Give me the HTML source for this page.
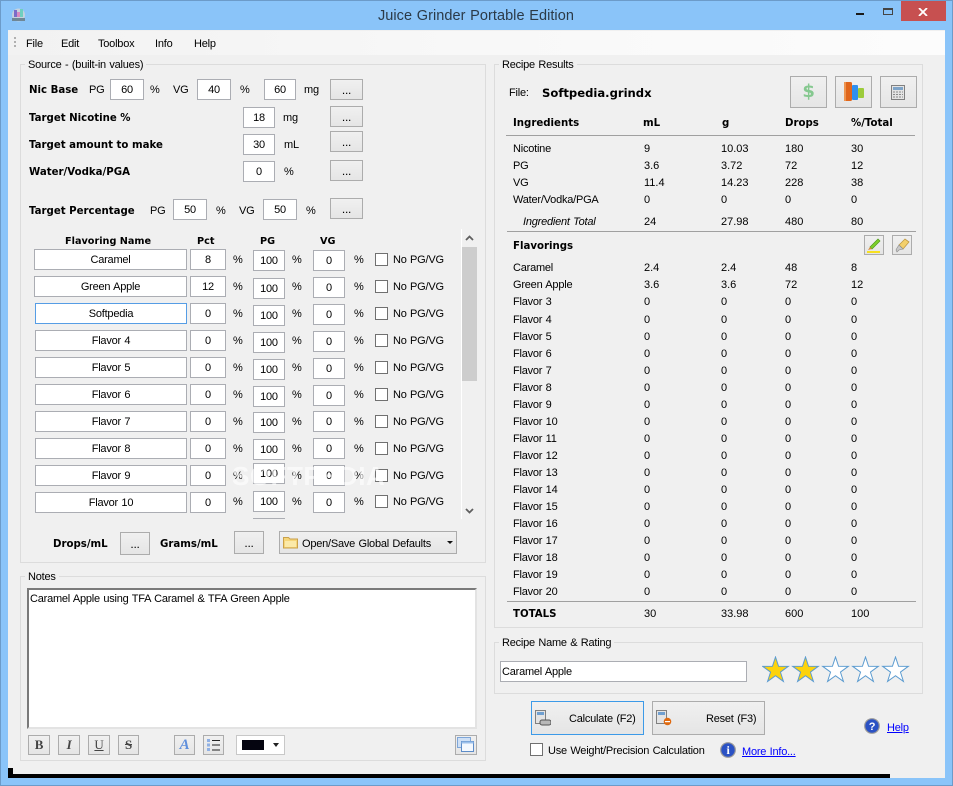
<!DOCTYPE html>
<html><head><meta charset="utf-8"><style>
html,body{margin:0;padding:0;width:953px;height:786px;overflow:hidden;background:#8ac4f9}
*{box-sizing:border-box}
body{font:11px "Liberation Sans",sans-serif;color:#000;position:relative;letter-spacing:-.22px;word-spacing:.6px}
div,span,svg{position:absolute}
.t{white-space:nowrap;height:14px;line-height:14px;margin-top:1px}
.t.p{margin-top:0}
.b{font-family:"DejaVu Sans",sans-serif;font-weight:bold;font-size:10.2px;letter-spacing:0;word-spacing:0;position:absolute;white-space:nowrap;height:14px;line-height:14px;margin-top:2px}
.fs{border:1px solid #dcdcdc}
.lg{background:#f0f0f0;padding:0 3px;height:14px;line-height:14px;white-space:nowrap;margin-top:1px}
.i{background:#fff;border:1px solid #abadb3;text-align:center;line-height:21px;height:21px;white-space:nowrap}
.btn{border:1px solid #acacac;background:linear-gradient(#f0f0f0,#e5e5e5);text-align:center;line-height:21px;height:21px;width:33px;font-size:12px}
.cb{background:#fff;border:1px solid #707070;width:13px;height:13px}
.r{height:14px;left:0;width:953px;margin-top:1px}
.r span{white-space:nowrap;line-height:14px;height:14px}
.a{left:513px}.c1{left:644px;letter-spacing:0}.c2{left:721px;letter-spacing:0}.c3{left:785px;letter-spacing:0}.c4{left:851px;letter-spacing:0}
.hl{background:#a0a0a0;height:1px}
a{color:#00f;text-decoration:underline;position:absolute;white-space:nowrap;line-height:14px;margin-top:1px}
</style></head><body>
<div style="left:0;top:0;width:953px;height:786px;border:1px solid #6c9bc9"></div>
<svg style="left:11px;top:7px" width="15" height="15" viewBox="0 0 15 15"><circle cx="7.500" cy="8" r="6.500" fill="#c6d2de"/><rect x="3" y="3" width="3" height="7" fill="#7a6cc8"/><rect x="9" y="2" width="3" height="8" fill="#6fcfc0"/><rect x="6" y="5" width="3" height="5" fill="#d88ac0"/><rect x="1" y="11" width="13" height="3" fill="#6f8796"/></svg>
<div class="t" style="left:378px;top:6px;font-size:14.5px;line-height:18px;height:18px;color:#2b3a48;letter-spacing:.05px">Juice Grinder Portable Edition</div>
<div style="left:856px;top:13px;width:8px;height:2px;background:#1a1a1a"></div>
<div style="left:883px;top:8px;width:10px;height:7px;border:1px solid #444;border-top-width:2px"></div>
<div style="left:901px;top:1px;width:45px;height:20px;background:#c75050"></div>
<svg style="left:918px;top:8px" width="10" height="8" viewBox="0 0 10 8"><path d="M1 0L9 8M9 0L1 8" stroke="#fff" stroke-width="1.800"/></svg>

<div style="left:8px;top:30px;width:937px;height:748px;background:#f0f0f0"></div>
<div style="left:8px;top:31px;width:937px;height:24px;background:linear-gradient(90deg,#f2f2f2,#f8f8f8 50%,#fcfcfc)"></div>
<div style="left:14px;top:37px;width:2px;height:10px;background:repeating-linear-gradient(#b0b0b0 0 2px,transparent 2px 4px)"></div>
<div class="t" style="left:26px;top:36px">File</div>
<div class="t" style="left:61px;top:36px">Edit</div>
<div class="t" style="left:98px;top:36px">Toolbox</div>
<div class="t" style="left:155px;top:36px">Info</div>
<div class="t" style="left:194px;top:36px">Help</div>

<div class="fs" style="left:20px;top:64px;width:466px;height:499px"></div>
<div class="lg" style="left:25px;top:57px">Source - (built-in values)</div>
<div class="b" style="left:29px;top:82px">Nic Base</div>
<div class="t" style="left:89px;top:82px">PG</div><div class="i" style="left:110px;top:79px;width:34px">60</div><div class="t" style="left:150px;top:82px">%</div>
<div class="t" style="left:173px;top:82px">VG</div><div class="i" style="left:197px;top:79px;width:34px">40</div><div class="t" style="left:240px;top:82px">%</div>
<div class="i" style="left:264px;top:79px;width:32px">60</div><div class="t" style="left:304px;top:82px">mg</div>
<div class="btn" style="left:330px;top:79px">...</div>
<div class="b" style="left:29px;top:110px">Target Nicotine %</div>
<div class="i" style="left:243px;top:107px;width:32px">18</div><div class="t" style="left:283px;top:110px">mg</div><div class="btn" style="left:330px;top:106px">...</div>
<div class="b" style="left:29px;top:137px">Target amount to make</div>
<div class="i" style="left:243px;top:134px;width:32px">30</div><div class="t" style="left:284px;top:137px">mL</div><div class="btn" style="left:330px;top:131px">...</div>
<div class="b" style="left:29px;top:164px">Water/Vodka/PGA</div>
<div class="i" style="left:243px;top:161px;width:32px">0</div><div class="t" style="left:284px;top:164px">%</div><div class="btn" style="left:330px;top:160px">...</div>
<div class="b" style="left:29px;top:203px">Target Percentage</div>
<div class="t" style="left:150px;top:203px">PG</div><div class="i" style="left:173px;top:199px;width:34px">50</div><div class="t" style="left:216px;top:203px">%</div>
<div class="t" style="left:239px;top:203px">VG</div><div class="i" style="left:263px;top:199px;width:34px">50</div><div class="t" style="left:306px;top:203px">%</div>
<div class="btn" style="left:330px;top:198px">...</div>

<div class="b" style="left:65px;top:233px;font-size:9.700px">Flavoring Name</div><div class="b" style="left:197px;top:233px;font-size:9.700px">Pct</div><div class="b" style="left:260px;top:233px;font-size:9.700px">PG</div><div class="b" style="left:320px;top:233px;font-size:9.700px">VG</div>

<div class="i" style="left:34px;top:249px;width:153px">Caramel</div><div class="i" style="left:190px;top:249px;width:36px">8</div><div class="t p" style="left:233px;top:253px">%</div><div class="i" style="left:253px;top:250px;width:32px">100</div><div class="t p" style="left:292px;top:253px">%</div><div class="i" style="left:313px;top:250px;width:32px">0</div><div class="t p" style="left:354px;top:253px">%</div><div class="cb" style="left:375px;top:253px"></div><div class="t p" style="left:393px;top:253px">No PG/VG</div>
<div class="i" style="left:34px;top:276px;width:153px">Green Apple</div><div class="i" style="left:190px;top:276px;width:36px">12</div><div class="t p" style="left:233px;top:280px">%</div><div class="i" style="left:253px;top:278px;width:32px">100</div><div class="t p" style="left:292px;top:280px">%</div><div class="i" style="left:313px;top:277px;width:32px">0</div><div class="t p" style="left:354px;top:280px">%</div><div class="cb" style="left:375px;top:280px"></div><div class="t p" style="left:393px;top:280px">No PG/VG</div>
<div class="i" style="left:35px;top:303px;width:152px;border-color:#569de5">Softpedia</div><div class="i" style="left:190px;top:303px;width:36px">0</div><div class="t p" style="left:233px;top:307px">%</div><div class="i" style="left:253px;top:305px;width:32px">100</div><div class="t p" style="left:292px;top:307px">%</div><div class="i" style="left:313px;top:304px;width:32px">0</div><div class="t p" style="left:354px;top:307px">%</div><div class="cb" style="left:375px;top:307px"></div><div class="t p" style="left:393px;top:307px">No PG/VG</div>
<div class="i" style="left:35px;top:330px;width:152px">Flavor 4</div><div class="i" style="left:190px;top:330px;width:36px">0</div><div class="t p" style="left:233px;top:334px">%</div><div class="i" style="left:253px;top:332px;width:32px">100</div><div class="t p" style="left:292px;top:334px">%</div><div class="i" style="left:313px;top:331px;width:32px">0</div><div class="t p" style="left:354px;top:334px">%</div><div class="cb" style="left:375px;top:334px"></div><div class="t p" style="left:393px;top:334px">No PG/VG</div>
<div class="i" style="left:35px;top:357px;width:152px">Flavor 5</div><div class="i" style="left:190px;top:357px;width:36px">0</div><div class="t p" style="left:233px;top:361px">%</div><div class="i" style="left:253px;top:359px;width:32px">100</div><div class="t p" style="left:292px;top:361px">%</div><div class="i" style="left:313px;top:358px;width:32px">0</div><div class="t p" style="left:354px;top:361px">%</div><div class="cb" style="left:375px;top:361px"></div><div class="t p" style="left:393px;top:361px">No PG/VG</div>
<div class="i" style="left:35px;top:384px;width:152px">Flavor 6</div><div class="i" style="left:190px;top:384px;width:36px">0</div><div class="t p" style="left:233px;top:388px">%</div><div class="i" style="left:253px;top:386px;width:32px">100</div><div class="t p" style="left:292px;top:388px">%</div><div class="i" style="left:313px;top:385px;width:32px">0</div><div class="t p" style="left:354px;top:388px">%</div><div class="cb" style="left:375px;top:388px"></div><div class="t p" style="left:393px;top:388px">No PG/VG</div>
<div class="i" style="left:35px;top:411px;width:152px">Flavor 7</div><div class="i" style="left:190px;top:411px;width:36px">0</div><div class="t p" style="left:233px;top:415px">%</div><div class="i" style="left:253px;top:412px;width:32px">100</div><div class="t p" style="left:292px;top:415px">%</div><div class="i" style="left:313px;top:411px;width:32px">0</div><div class="t p" style="left:354px;top:415px">%</div><div class="cb" style="left:375px;top:415px"></div><div class="t p" style="left:393px;top:415px">No PG/VG</div>
<div class="i" style="left:35px;top:438px;width:152px">Flavor 8</div><div class="i" style="left:190px;top:438px;width:36px">0</div><div class="t p" style="left:233px;top:442px">%</div><div class="i" style="left:253px;top:439px;width:32px">100</div><div class="t p" style="left:292px;top:442px">%</div><div class="i" style="left:313px;top:438px;width:32px">0</div><div class="t p" style="left:354px;top:442px">%</div><div class="cb" style="left:375px;top:442px"></div><div class="t p" style="left:393px;top:442px">No PG/VG</div>
<div class="i" style="left:35px;top:465px;width:152px">Flavor 9</div><div class="i" style="left:190px;top:465px;width:36px">0</div><div class="t p" style="left:233px;top:469px">%</div><div class="i" style="left:253px;top:463px;width:32px">100</div><div class="t p" style="left:292px;top:469px">%</div><div class="i" style="left:313px;top:465px;width:32px">0</div><div class="t p" style="left:354px;top:469px">%</div><div class="cb" style="left:375px;top:469px"></div><div class="t p" style="left:393px;top:469px">No PG/VG</div>
<div class="i" style="left:35px;top:492px;width:152px">Flavor 10</div><div class="i" style="left:190px;top:492px;width:36px">0</div><div class="t p" style="left:233px;top:495px">%</div><div class="i" style="left:253px;top:491px;width:32px">100</div><div class="t p" style="left:292px;top:495px">%</div><div class="i" style="left:313px;top:492px;width:32px">0</div><div class="t p" style="left:354px;top:495px">%</div><div class="cb" style="left:375px;top:495px"></div><div class="t p" style="left:393px;top:495px">No PG/VG</div>
<div style="left:253px;top:518px;width:32px;height:1px;background:#abadb3"></div>
<div style="left:232px;top:461px;height:30px;font:bold 26px/30px 'Liberation Sans',sans-serif;letter-spacing:.5px;color:rgba(255,255,255,.6);white-space:nowrap">SOFTPEDIA</div>

<div style="left:461px;top:229px;width:1px;height:290px;background:#fff"></div>
<div style="left:462px;top:247px;width:15px;height:134px;background:#cdcdcd"></div>
<svg style="left:465px;top:235px" width="9" height="6" viewBox="0 0 9 6"><path d="M1 5L4.500 1.500L8 5" fill="none" stroke="#606060" stroke-width="1.800"/></svg>
<svg style="left:465px;top:508px" width="9" height="6" viewBox="0 0 9 6"><path d="M1 1L4.500 4.500L8 1" fill="none" stroke="#606060" stroke-width="1.800"/></svg>

<div class="b" style="left:53px;top:536px">Drops/mL</div>
<div class="btn" style="left:120px;top:532px;width:30px;height:23px;line-height:23px">...</div>
<div class="b" style="left:160px;top:536px">Grams/mL</div>
<div class="btn" style="left:234px;top:531px;width:30px;height:23px;line-height:23px">...</div>
<div class="btn" style="left:279px;top:531px;width:178px;height:23px"></div>
<svg style="left:283px;top:536px" width="15" height="13" viewBox="0 0 15 13"><path d="M.5 12V1.500H5.500L7 3H14.500V12Z" fill="#f6d679" stroke="#c9a04a"/><rect x="2" y="5" width="11" height="6" fill="#fbe9a8"/></svg>
<div class="t" style="left:302px;top:536px">Open/Save Global Defaults</div>
<div style="left:447px;top:541px;width:0;height:0;border:3px solid transparent;border-top:3px solid #111;border-bottom:0"></div>

<div class="fs" style="left:20px;top:576px;width:466px;height:185px"></div>
<div class="lg" style="left:25px;top:569px">Notes</div>
<div style="left:27px;top:588px;width:450px;height:141px;background:#fff;border:2px solid #e3e3e3;border-top-color:#7a7a7a;border-left-color:#7a7a7a"></div>
<div class="t" style="left:30px;top:591px">Caramel Apple using TFA Caramel &amp; TFA Green Apple</div>

<div class="btn" style="left:28px;top:735px;width:22px;height:20px;font:bold 13px/18px 'Liberation Serif',serif;color:#444">B</div>
<div class="btn" style="left:58px;top:735px;width:22px;height:20px;font:italic bold 13px/18px 'Liberation Serif',serif;color:#444">I</div>
<div class="btn" style="left:88px;top:735px;width:22px;height:20px;font:13px/18px 'Liberation Serif',serif;color:#444;text-decoration:underline">U</div>
<div class="btn" style="left:118px;top:735px;width:21px;height:20px;font:bold 13px/18px 'Liberation Serif',serif;color:#444;text-decoration:line-through">S</div>
<div class="btn" style="left:174px;top:735px;width:21px;height:20px;font:italic bold 15px/18px 'Liberation Serif',serif;color:#5f8fdc">A</div>
<div class="btn" style="left:203px;top:735px;width:21px;height:20px"></div>
<svg style="left:206px;top:738px" width="15" height="14" viewBox="0 0 15 14"><path d="M6 2.500H14M6 7H14M6 12H14" stroke="#222" stroke-width="1"/><rect x="1" y="1" width="3" height="3" fill="#8fb0e4"/><rect x="1" y="5.500" width="3" height="3" fill="#8fb0e4"/><rect x="1" y="10" width="3" height="3" fill="#8fb0e4"/></svg>
<div style="left:236px;top:735px;width:49px;height:20px;background:#fff;border:1px solid #c8c8c8"></div>
<div style="left:242px;top:740px;width:22px;height:10px;background:#050510"></div>
<div style="left:273px;top:743px;width:0;height:0;border:3px solid transparent;border-top:4px solid #222;border-bottom:0"></div>
<div class="btn" style="left:455px;top:735px;width:22px;height:20px"></div>
<svg style="left:457px;top:737px" width="18" height="16" viewBox="0 0 18 16"><rect x=".5" y=".5" width="13" height="10" fill="#cfe0f5" stroke="#7ea6d8"/><rect x="4.500" y="4.500" width="12" height="10" fill="#f4f8fd" stroke="#5d8cc8"/><rect x="4.500" y="4.500" width="12" height="2" fill="#9cc0ea"/></svg>

<div class="fs" style="left:494px;top:64px;width:429px;height:564px"></div>
<div class="lg" style="left:499px;top:57px">Recipe Results</div>
<div class="t" style="left:509px;top:85px">File:</div>
<div class="b" style="left:542px;top:84px;font-size:11.600px">Softpedia.grindx</div>
<div class="btn" style="left:790px;top:76px;width:37px;height:32px"></div>
<div class="t p" style="left:790px;top:76px;width:37px;height:32px;text-align:center;font:bold 18px/32px 'DejaVu Sans',sans-serif;color:#85c88f">$</div>
<div class="btn" style="left:835px;top:76px;width:37px;height:32px"></div>
<svg style="left:843px;top:81px" width="22" height="22" viewBox="0 0 22 22"><rect x="15" y="7" width="6" height="10" rx="1" fill="#9ccb3b"/><rect x="9" y="4" width="6" height="15" rx="1" fill="#2f8fef"/><rect x="1" y="1" width="8" height="19" rx="1.500" fill="#e0661c"/><rect x="1" y="1" width="2" height="19" fill="#ee9550"/></svg>
<div class="btn" style="left:880px;top:76px;width:37px;height:32px"></div>
<svg style="left:891px;top:85px" width="14" height="15" viewBox="0 0 14 15"><rect x=".5" y=".5" width="13" height="14" fill="#e4e4e4" stroke="#808080"/><rect x="2" y="2" width="10" height="3" fill="#7ea4c8"/><path d="M2 7H12M2 9.500H12M2 12H12" stroke="#8a8a8a" stroke-dasharray="2 1"/></svg>

<div class="b" style="left:513px;top:115px">Ingredients</div><div class="b" style="left:643px;top:115px">mL</div><div class="b" style="left:722px;top:115px">g</div><div class="b" style="left:785px;top:115px">Drops</div><div class="b" style="left:851px;top:115px">%/Total</div>
<div class="hl" style="left:506px;top:135px;width:409px"></div>
<div class="r" style="top:141px"><span class="a">Nicotine</span><span class="c1">9</span><span class="c2">10.03</span><span class="c3">180</span><span class="c4">30</span></div>
<div class="r" style="top:158px"><span class="a">PG</span><span class="c1">3.6</span><span class="c2">3.72</span><span class="c3">72</span><span class="c4">12</span></div>
<div class="r" style="top:175px"><span class="a">VG</span><span class="c1">11.4</span><span class="c2">14.23</span><span class="c3">228</span><span class="c4">38</span></div>
<div class="r" style="top:192px"><span class="a">Water/Vodka/PGA</span><span class="c1">0</span><span class="c2">0</span><span class="c3">0</span><span class="c4">0</span></div>
<div class="r" style="top:214px"><span class="a" style="left:523px;font-style:italic">Ingredient Total</span><span class="c1">24</span><span class="c2">27.98</span><span class="c3">480</span><span class="c4">80</span></div>
<div class="hl" style="left:507px;top:231px;width:409px"></div>
<div class="b" style="left:513px;top:238px">Flavorings</div>
<div class="btn" style="left:864px;top:235px;width:20px;height:20px"></div>
<svg style="left:866px;top:237px" width="16" height="16" viewBox="0 0 16 16"><path d="M4 10L12 2L14 4L6 12Z" fill="#7ed02a" stroke="#4e9a18" stroke-width=".7"/><path d="M4 10L2 13L6 12Z" fill="#d88a3a"/><rect x="1" y="14" width="13" height="2" fill="#f7e020"/></svg>
<div class="btn" style="left:892px;top:235px;width:20px;height:20px"></div>
<svg style="left:894px;top:237px" width="16" height="16" viewBox="0 0 16 16"><path d="M5 8L11 2L15 5L9 12Z" fill="#f3d06c" stroke="#bf9a44" stroke-width=".8"/><path d="M5 8L9 12L5 13L3 15L2 13L3 11Z" fill="#c9c9c9" stroke="#8a8a8a" stroke-width=".6"/></svg>

<div class="r" style="top:260px"><span class="a">Caramel</span><span class="c1">2.4</span><span class="c2">2.4</span><span class="c3">48</span><span class="c4">8</span></div>
<div class="r" style="top:277px"><span class="a">Green Apple</span><span class="c1">3.6</span><span class="c2">3.6</span><span class="c3">72</span><span class="c4">12</span></div>
<div class="r" style="top:294px"><span class="a">Flavor 3</span><span class="c1">0</span><span class="c2">0</span><span class="c3">0</span><span class="c4">0</span></div>
<div class="r" style="top:312px"><span class="a">Flavor 4</span><span class="c1">0</span><span class="c2">0</span><span class="c3">0</span><span class="c4">0</span></div>
<div class="r" style="top:329px"><span class="a">Flavor 5</span><span class="c1">0</span><span class="c2">0</span><span class="c3">0</span><span class="c4">0</span></div>
<div class="r" style="top:346px"><span class="a">Flavor 6</span><span class="c1">0</span><span class="c2">0</span><span class="c3">0</span><span class="c4">0</span></div>
<div class="r" style="top:363px"><span class="a">Flavor 7</span><span class="c1">0</span><span class="c2">0</span><span class="c3">0</span><span class="c4">0</span></div>
<div class="r" style="top:380px"><span class="a">Flavor 8</span><span class="c1">0</span><span class="c2">0</span><span class="c3">0</span><span class="c4">0</span></div>
<div class="r" style="top:397px"><span class="a">Flavor 9</span><span class="c1">0</span><span class="c2">0</span><span class="c3">0</span><span class="c4">0</span></div>
<div class="r" style="top:414px"><span class="a">Flavor 10</span><span class="c1">0</span><span class="c2">0</span><span class="c3">0</span><span class="c4">0</span></div>
<div class="r" style="top:431px"><span class="a">Flavor 11</span><span class="c1">0</span><span class="c2">0</span><span class="c3">0</span><span class="c4">0</span></div>
<div class="r" style="top:448px"><span class="a">Flavor 12</span><span class="c1">0</span><span class="c2">0</span><span class="c3">0</span><span class="c4">0</span></div>
<div class="r" style="top:465px"><span class="a">Flavor 13</span><span class="c1">0</span><span class="c2">0</span><span class="c3">0</span><span class="c4">0</span></div>
<div class="r" style="top:482px"><span class="a">Flavor 14</span><span class="c1">0</span><span class="c2">0</span><span class="c3">0</span><span class="c4">0</span></div>
<div class="r" style="top:499px"><span class="a">Flavor 15</span><span class="c1">0</span><span class="c2">0</span><span class="c3">0</span><span class="c4">0</span></div>
<div class="r" style="top:516px"><span class="a">Flavor 16</span><span class="c1">0</span><span class="c2">0</span><span class="c3">0</span><span class="c4">0</span></div>
<div class="r" style="top:533px"><span class="a">Flavor 17</span><span class="c1">0</span><span class="c2">0</span><span class="c3">0</span><span class="c4">0</span></div>
<div class="r" style="top:550px"><span class="a">Flavor 18</span><span class="c1">0</span><span class="c2">0</span><span class="c3">0</span><span class="c4">0</span></div>
<div class="r" style="top:567px"><span class="a">Flavor 19</span><span class="c1">0</span><span class="c2">0</span><span class="c3">0</span><span class="c4">0</span></div>
<div class="r" style="top:584px"><span class="a">Flavor 20</span><span class="c1">0</span><span class="c2">0</span><span class="c3">0</span><span class="c4">0</span></div>
<div class="hl" style="left:507px;top:601px;width:409px"></div>
<div class="b" style="left:513px;top:606px">TOTALS</div>
<div class="r" style="top:606px"><span class="c1">30</span><span class="c2">33.98</span><span class="c3">600</span><span class="c4">100</span></div>

<div class="fs" style="left:494px;top:642px;width:429px;height:52px"></div>
<div class="lg" style="left:499px;top:635px">Recipe Name &amp; Rating</div>
<div class="i" style="left:500px;top:661px;width:247px;text-align:left;padding-left:1px">Caramel Apple</div>
<svg style="left:762px;top:656px" width="150" height="27" viewBox="0 0 150 27">
<path d="M13.500 1L16.560 10.300L26.340 10.330L18.450 16.100L21.440 25.400L13.500 19.700L5.560 25.400L8.550 16.100L.66 10.330L10.440 10.300Z" fill="#fdd30c" stroke="#5b9bd0"/>
<path transform="translate(30 0)" d="M13.500 1L16.560 10.300L26.340 10.330L18.450 16.100L21.440 25.400L13.500 19.700L5.560 25.400L8.550 16.100L.66 10.330L10.440 10.300Z" fill="#fdd30c" stroke="#5b9bd0"/>
<path transform="translate(60 0)" d="M13.500 1L16.560 10.300L26.340 10.330L18.450 16.100L21.440 25.400L13.500 19.700L5.560 25.400L8.550 16.100L.66 10.330L10.440 10.300Z" fill="#fff" stroke="#5b9bd0"/>
<path transform="translate(90 0)" d="M13.500 1L16.560 10.300L26.340 10.330L18.450 16.100L21.440 25.400L13.500 19.700L5.560 25.400L8.550 16.100L.66 10.330L10.440 10.300Z" fill="#fff" stroke="#5b9bd0"/>
<path transform="translate(120 0)" d="M13.500 1L16.560 10.300L26.340 10.330L18.450 16.100L21.440 25.400L13.500 19.700L5.560 25.400L8.550 16.100L.66 10.330L10.440 10.300Z" fill="#fff" stroke="#5b9bd0"/>
</svg>

<div class="btn" style="left:531px;top:701px;width:113px;height:34px;border-color:#3c9ae8"></div>
<svg style="left:535px;top:710px" width="16" height="16" viewBox="0 0 16 16"><rect x=".5" y=".5" width="10" height="13" fill="#e4e4e4" stroke="#808080"/><rect x="2" y="2" width="7" height="3" fill="#6f9fd0"/><rect x="5" y="10" width="11" height="5" rx="2" fill="#b8b8b8" stroke="#555"/></svg>
<div class="t" style="left:569px;top:711px">Calculate (F2)</div>
<div class="btn" style="left:652px;top:701px;width:113px;height:34px"></div>
<svg style="left:656px;top:710px" width="16" height="16" viewBox="0 0 16 16"><rect x=".5" y=".5" width="10" height="13" fill="#e4e4e4" stroke="#808080"/><rect x="2" y="2" width="7" height="3" fill="#6f9fd0"/><circle cx="11.500" cy="11.500" r="3.800" fill="#e06a10"/><rect x="9" y="11" width="5" height="1.200" fill="#fff"/></svg>
<div class="t" style="left:706px;top:711px">Reset (F3)</div>
<div class="cb" style="left:530px;top:743px"></div>
<div class="t" style="left:548px;top:743px">Use Weight/Precision Calculation</div>
<svg style="left:720px;top:742px" width="16" height="16" viewBox="0 0 16 16"><circle cx="8" cy="8" r="7.300" fill="#2b52c4" stroke="#9a9a9a" stroke-width="1.200"/><text x="8" y="12" font-family="Liberation Serif" font-weight="bold" font-size="12" fill="#fff" text-anchor="middle">i</text></svg>
<a style="left:742px;top:744px">More Info...</a>
<svg style="left:864px;top:718px" width="16" height="16" viewBox="0 0 16 16"><circle cx="8" cy="8" r="7.300" fill="#2b52c4" stroke="#9a9a9a" stroke-width="1.200"/><text x="8" y="12" font-family="Liberation Sans" font-weight="bold" font-size="11" fill="#fff" text-anchor="middle">?</text></svg>
<a style="left:887px;top:720px">Help</a>

<div style="left:8px;top:768px;width:5px;height:6px;background:#000"></div>
<div style="left:8px;top:774px;width:882px;height:4px;background:#000"></div>
</body></html>
